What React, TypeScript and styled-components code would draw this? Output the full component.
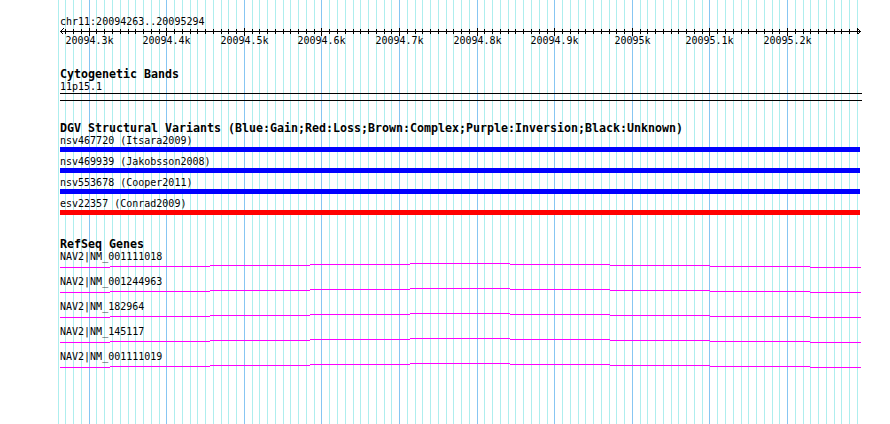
import React from 'react';
import styled, {createGlobalStyle} from 'styled-components';

const START = 20094263;
const END = 20095294;
const LEFT = 60;
const WIDTH = 800;
const PAGE_W = 890;
const PAGE_H = 424;

const toX = (bp: number) => LEFT + ((bp - START) * WIDTH) / (END - START);

// every 10bp between the ends, majors every 100bp
const gridStops: {x: number; major: boolean; bp: number}[] = [];
for (let bp = 20094260; bp <= 20095290; bp += 10) {
    gridStops.push({x: Math.round(toX(bp)), major: bp % 100 === 0, bp});
}

const label = (bp: number) => {
    const k = bp / 1000;
    return `${Number.isInteger(k) ? k : k.toFixed(1)}k`;
};

const variants = [
    {name: 'nsv467720 (Itsara2009)', color: '#0000ff'},
    {name: 'nsv469939 (Jakobsson2008)', color: '#0000ff'},
    {name: 'nsv553678 (Cooper2011)', color: '#0000ff'},
    {name: 'esv22357 (Conrad2009)', color: '#ff0000'},
];

const genes = ['NAV2|NM_001111018', 'NAV2|NM_001244963', 'NAV2|NM_182964', 'NAV2|NM_145117', 'NAV2|NM_001111019'];

// shallow intron hat, one pixel per 100px step
const hat: [number, number, number][] = [
    [60, 110, 5],
    [110, 210, 4],
    [210, 310, 3],
    [310, 410, 2],
    [410, 510, 1],
    [510, 610, 2],
    [610, 710, 3],
    [710, 810, 4],
    [810, 861, 5],
];

const GlobalStyle = createGlobalStyle`
    html, body {
        margin: 0;
        padding: 0;
        background: #fff;
    }
`;

const Page = styled.div`
    position: relative;
    width: ${PAGE_W}px;
    height: ${PAGE_H}px;
    background: #fff;
    overflow: hidden;
    color: #000;
`;

const GridLayer = styled.svg`
    position: absolute;
    left: 0;
    top: 0;
`;

const Tracks = styled.div`
    position: relative;
    display: flex;
    flex-direction: column;
    padding-top: 16px;
`;

const Text = styled.div`
    margin-left: ${LEFT}px;
    height: 11px;
    font: 10px/11px "DejaVu Sans Mono", monospace;
    white-space: pre;
`;

const Title = styled.div<{$gap: number}>`
    margin: ${({$gap}) => $gap}px 0 0 ${LEFT}px;
    height: 13px;
    font: bold 11.63px/13px "DejaVu Sans Mono", monospace;
    white-space: pre;
`;

const Band = styled.div`
    margin: 1px 0 0 ${LEFT}px;
    width: 802px;
    height: 6px;
    border-top: 1px solid #000;
    border-bottom: 1px solid #000;
`;

const Variant = styled.div`
    display: flex;
    flex-direction: column;
    margin-bottom: 4px;
`;

const Bar = styled.div<{$color: string}>`
    margin: 1px 0 0 ${LEFT}px;
    width: ${WIDTH}px;
    height: 5px;
    background: ${({$color}) => $color};
`;

const Gene = styled.div`
    display: flex;
    flex-direction: column;
    margin-bottom: 6px;
`;

const Drawing = styled.svg`
    display: block;
    shape-rendering: crispEdges;
`;

const Grid = () => (
    <GridLayer width={PAGE_W} height={PAGE_H} shapeRendering="crispEdges">
        {gridStops.map(s => (
            <rect key={s.bp} x={s.x} y={0} width={1} height={PAGE_H} fill={s.major ? '#87c6f2' : '#aeeeee'}/>
        ))}
    </GridLayer>
);

const Ruler = () => (
    <Drawing width={PAGE_W} height={20}>
        <rect x={LEFT} y={4} width={WIDTH + 1} height={1} fill="#000"/>
        <polyline points={`${LEFT + 3.5},1.5 ${LEFT + 0.5},4.5 ${LEFT + 3.5},7.5`} fill="none" stroke="#000"/>
        <polyline points={`${LEFT + WIDTH - 2.5},1.5 ${LEFT + WIDTH + 0.5},4.5 ${LEFT + WIDTH - 2.5},7.5`} fill="none" stroke="#000"/>
        {gridStops.filter(s => s.bp > START && s.bp < END).map(s => (
            <rect key={s.bp} x={s.x} y={s.major ? 1 : 2} width={1} height={s.major ? 8 : 5} fill="#000"/>
        ))}
        {gridStops.filter(s => s.major).map(s => (
            <text key={s.bp} x={s.x + 0.5} y={17} textAnchor="middle" fontSize={10}
                  fontFamily='"DejaVu Sans Mono", monospace' fill="#000">{label(s.bp)}</text>
        ))}
    </Drawing>
);

const GeneLine = () => (
    <Drawing width={PAGE_W} height={8}>
        {hat.map(([x1, x2, y]) => (
            <rect key={x1} x={x1} y={y} width={x2 - x1} height={1} fill="#ff00ff"/>
        ))}
    </Drawing>
);

export default function App() {
    return (
        <Page>
            <GlobalStyle/>
            <Grid/>
            <Tracks>
                <Text>chr11:20094263..20095294</Text>
                <Ruler/>

                <Title $gap={21}>Cytogenetic Bands</Title>
                <Text>11p15.1</Text>
                <Band/>

                <Title $gap={21}>DGV Structural Variants (Blue:Gain;Red:Loss;Brown:Complex;Purple:Inversion;Black:Unknown)</Title>
                {variants.map(v => (
                    <Variant key={v.name}>
                        <Text>{v.name}</Text>
                        <Bar $color={v.color}/>
                    </Variant>
                ))}

                <Title $gap={19}>RefSeq Genes</Title>
                {genes.map(g => (
                    <Gene key={g}>
                        <Text>{g}</Text>
                        <GeneLine/>
                    </Gene>
                ))}
            </Tracks>
        </Page>
    );
}
